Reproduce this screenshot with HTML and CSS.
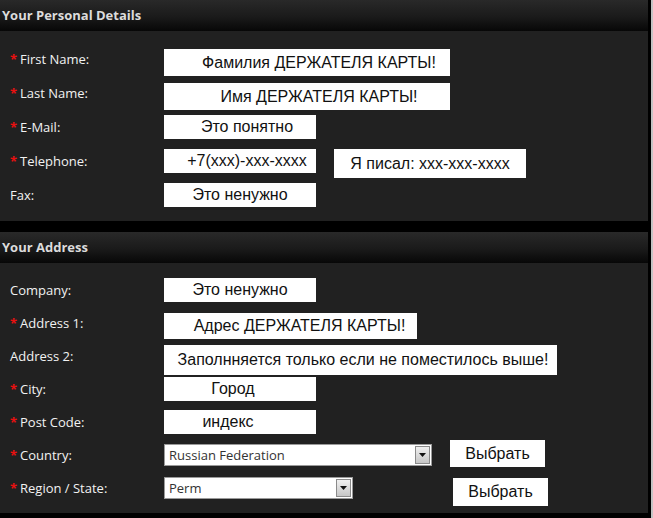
FILE: index.html
```html
<!DOCTYPE html>
<html lang="ru">
<head>
<meta charset="UTF-8">
<title>Checkout</title>
<link rel="stylesheet" href="styles.css">
</head>
<body>
<div class="page">

  <!-- Personal details -->
  <section class="box">
    <h2 class="box-head">Your Personal Details</h2>
    <div class="box-body first">
      <div class="row">
        <span class="lbl"><span class="req">*</span>First Name:</span>
        <div class="field note note-name">Фамилия ДЕРЖАТЕЛЯ КАРТЫ!</div>
      </div>
      <div class="row">
        <span class="lbl"><span class="req">*</span>Last Name:</span>
        <div class="field note note-name">Имя ДЕРЖАТЕЛЯ КАРТЫ!</div>
      </div>
      <div class="row">
        <span class="lbl"><span class="req">*</span>E-Mail:</span>
        <div class="field shift-r">Это понятно</div>
      </div>
      <div class="row">
        <span class="lbl"><span class="req">*</span>Telephone:</span>
        <div class="field shift-r">+7(xxx)-xxx-xxxx</div>
        <div class="field note note-tel">Я писал: xxx-xxx-xxxx</div>
      </div>
      <div class="row">
        <span class="lbl">Fax:</span>
        <div class="field">Это ненужно</div>
      </div>
    </div>
  </section>

  <!-- Address -->
  <section class="box">
    <h2 class="box-head">Your Address</h2>
    <div class="box-body second">
      <div class="row">
        <span class="lbl">Company:</span>
        <div class="field">Это ненужно</div>
      </div>
      <div class="row">
        <span class="lbl"><span class="req">*</span>Address 1:</span>
        <div class="field note note-addr1">Адрес ДЕРЖАТЕЛЯ КАРТЫ!</div>
      </div>
      <div class="row">
        <span class="lbl">Address 2:</span>
        <div class="field note note-addr2">Заполнняется только если не поместилось выше!</div>
      </div>
      <div class="row">
        <span class="lbl"><span class="req">*</span>City:</span>
        <div class="field shift-l">Город</div>
      </div>
      <div class="row">
        <span class="lbl"><span class="req">*</span>Post Code:</span>
        <div class="field shift-l2">индекс</div>
      </div>
      <div class="row">
        <span class="lbl"><span class="req">*</span>Country:</span>
        <div class="select select-country">
          <span class="select-text">Russian Federation</span>
          <span class="arrow"><svg width="7" height="4" viewBox="0 0 7 4"><path d="M0 0h7L3.5 4z" fill="#111"/></svg></span>
        </div>
        <div class="btn">Выбрать</div>
      </div>
      <div class="row">
        <span class="lbl"><span class="req">*</span>Region / State:</span>
        <div class="select select-region">
          <span class="select-text">Perm</span>
          <span class="arrow"><svg width="7" height="4" viewBox="0 0 7 4"><path d="M0 0h7L3.5 4z" fill="#111"/></svg></span>
        </div>
        <div class="btn btn-low">Выбрать</div>
      </div>
    </div>
  </section>

</div>
</body>
</html>
```

FILE: styles.css
```css
* { margin: 0; padding: 0; box-sizing: border-box; }
html, body { height: 100%; }
body { background: #c4c4c4; font-family: "Open Sans", "Liberation Sans", sans-serif; }
.page { width: 651px; height: 518px; background: #000; padding-right: 3px; }

.box { background: #212121; margin-bottom: 11px; }
.box-head { height: 31px; line-height: 31px; padding-left: 2px; font-size: 13px; font-weight: bold; color: #dcdcdc; background: linear-gradient(#292929, #1a1a1a 55%, #070707); }
.box-body.first { padding: 11px 0 9px; }
.box-body.second { padding: 10px 0 9px; }
.box-body.first .row { height: 34px; }
.box-body.second .row { height: 33px; }

.row { display: flex; align-items: center; }
.lbl { width: 164px; flex: none; padding-left: 10px; font-size: 13px; color: #f2f2f2; }
.req { display: inline-block; width: 10px; color: #e81010; font-weight: bold; font-size: 13px; }

.field { width: 152px; height: 24px; line-height: 24px; background: #fff; color: #111; text-align: center; font-family: "Liberation Sans", Arial, sans-serif; font-size: 16px; white-space: nowrap; }
.shift-r { padding-left: 14px; }
.shift-l { padding-right: 14px; }
.shift-l2 { padding-right: 24px; }

.note { height: 27px; line-height: 27px; margin-top: 6px; }
.note-name { width: 286px; padding-left: 24px; }
.note-tel { width: 192px; margin-left: 18px; margin-top: 5px; height: 29px; line-height: 29px; }
.note-addr1 { width: 253px; padding-left: 18px; height: 26px; line-height: 26px; }
.note-addr2 { width: 393px; padding-left: 5px; height: 30px; line-height: 30px; margin-top: 8px; }

.select { display: flex; align-items: center; height: 22px; background: #fff; border: 1px solid #9a9a9a; padding: 1px; }
.select-country { width: 268px; }
.select-region { width: 189px; }
.select-text { flex: 1; padding-left: 3px; font-size: 13px; color: #333; }
.arrow { display: flex; align-items: center; justify-content: center; width: 15px; height: 18px; border: 1px solid #8a8a8a; background: linear-gradient(#f0f0f0, #c6c6c6); }

.btn { width: 95px; height: 27px; line-height: 27px; margin-left: 18px; background: #fff; color: #111; text-align: center; font-family: "Liberation Sans", Arial, sans-serif; font-size: 16px; margin-top: -3px; }
.btn-low { margin-left: 100px; margin-top: 8px; height: 28px; line-height: 28px; }
```
